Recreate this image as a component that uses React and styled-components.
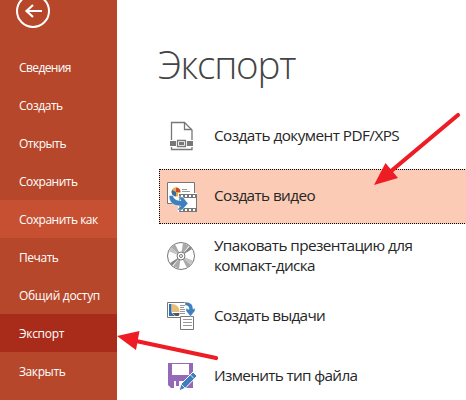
import React from 'react';
import styled, { createGlobalStyle } from 'styled-components';

const GlobalStyle = createGlobalStyle`
  * {
    box-sizing: border-box;
  }
  body {
    margin: 0;
    background: #fff;
    overflow: hidden;
  }
`;

const Page = styled.div`
  position: relative;
  display: flex;
  width: 466px;
  height: 400px;
  overflow: hidden;
  background: #fff;
  font-family: 'Open Sans', 'Noto Sans', sans-serif;
`;

const Sidebar = styled.nav`
  display: flex;
  flex-direction: column;
  width: 117px;
  flex-shrink: 0;
  background: #b7472a;
`;

const BackButton = styled.button`
  display: flex;
  align-items: flex-start;
  height: 48px;
  padding: 0 0 0 15px;
  border: none;
  background: transparent;
  flex-shrink: 0;
`;

const backgrounds = { hover: '#c75032', active: '#a92b1a' };

const NavItem = styled.a`
  display: flex;
  align-items: center;
  height: 38px;
  flex-shrink: 0;
  padding: 2px 0 0 19px;
  background: ${(props) => backgrounds[props.$state] || 'transparent'};
  color: #fff;
  font-size: 12px;
  font-weight: 450;
  line-height: 16px;
  letter-spacing: ${(props) => props.$spacing}px;
  white-space: nowrap;
`;

const Main = styled.main`
  flex: 1;
  min-width: 0;
  padding: 38px 0 0 41px;
`;

const Title = styled.h1`
  margin: 0;
  height: 71px;
  color: #444;
  font-size: 38.5px;
  font-weight: 300;
  line-height: 52px;
  letter-spacing: -1.2px;
`;

const ExportList = styled.div`
  display: flex;
  flex-direction: column;
  gap: 5px;
  padding-left: 1px;
`;

const ExportRow = styled.div`
  display: flex;
  align-items: center;
  width: 320px;
  height: 55px;
  padding-left: 6px;
  border: 1px dotted ${(props) => (props.$selected ? '#000' : 'transparent')};
  background: ${(props) => (props.$selected ? '#fbcbb5' : 'transparent')};

  svg {
    flex-shrink: 0;
  }
`;

const Label = styled.span`
  margin-left: 16px;
  padding-bottom: 3px;
  color: #262626;
  font-size: 15.3px;
  line-height: 20px;
  letter-spacing: ${(props) => props.$spacing}px;
  white-space: pre-line;
`;

const Arrows = styled.svg`
  position: absolute;
  top: 0;
  left: 0;
  pointer-events: none;
`;

const BackIcon = () => (
  <svg width="36" height="30" viewBox="0 0 36 30" fill="none" stroke="#fff">
    <circle cx="18" cy="11" r="16" strokeWidth="2" />
    <path d="M27 11H12M18 5l-6.5 6 6.5 6" strokeWidth="2.2" />
  </svg>
);

const PdfIcon = () => (
  <svg width="32" height="31" viewBox="0 0 32 31" fill="none" stroke="#777" strokeWidth="1.300">
    <path d="M5.500 19V1.500H18.500L26 9V19M5.500 26V28.500H26V26" />
    <path d="M18.500 1.500V8.500H26" />
    <path d="M4 20h6v5H4zM21 20h6v5h-6z" fill="#777" stroke="none" />
    <path d="M11.500 19.500h8v6h-8z" />
    <path d="M13 21h5v3h-5z" fill="#777" stroke="none" />
  </svg>
);

const VideoIcon = () => (
  <svg width="32" height="31" viewBox="0 0 32 31">
    <path d="M1.500 1.500h27v21h-27z" fill="#fff" stroke="#777" />
    <circle cx="10" cy="11" r="4.500" fill="#e0a94f" />
    <path d="M10 11V6.500a4.500 4.500 0 0 0-4 2.500z" fill="#e8ad58" />
    <path d="M10 6.500a4.500 4.500 0 0 1 4.500 4.500H10z" fill="#d24726" />
    <path d="M10 11L6 9a4.500 4.500 0 0 0 4 6.500z" fill="#356ea5" />
    <path d="M16 8.500h5M16 10.500h8" stroke="#999" />
    <path d="M12 12h19v19H12z" fill="#fff" />
    <path d="M13 13h18v18H13z" fill="#777" />
    <path d="M14 17h16v10H14z" fill="#fff" />
    <path d="M15 15h15M15 29h15" stroke="#fff" strokeWidth="2" strokeDasharray="2 2" />
    <path
      d="M3 14.500h4c1 4 4 5 8 5l-3-3.500h5l5 6.500-6 6.500h-5l3.500-4C8 25 3 22 3 14.500z"
      fill="#3f7fbc"
      stroke="#fff"
      strokeWidth=".5"
    />
  </svg>
);

const DiscIcon = () => (
  <svg width="32" height="31" viewBox="0 0 32 31">
    <circle cx="15" cy="15" r="13.500" fill="#fff" stroke="#777" />
    <path d="M15 15L5 6.500l4-3.500zM15 15l2-13 6 2.500zM15 15l10 9-4 3zM15 15l-2 12.500-6-2z" fill="#aaa" />
    <path d="M15 15L3 10.500 5 6.500zM15 15l12 4.500-2 4.500z" fill="#c4c4c4" />
    <path d="M15 15l9-10 2 3zM15 15l-9 10-2-3z" fill="#888" />
    <circle cx="15" cy="15" r="4" fill="#fff" stroke="#777" />
    <circle cx="15" cy="15" r="1.500" fill="#fff" stroke="#777" />
  </svg>
);

const HandoutIcon = () => (
  <svg width="32" height="31" viewBox="0 0 32 31">
    <path d="M20 1.500H1.500v15h13" fill="#fff" stroke="#777" />
    <path d="M3 3h2.500v8.500l3.500 3.500H3z" fill="#356ea5" />
    <path d="M6 3c4.500 0 7.500 3 7.500 8H6z" fill="#e9bd77" />
    <path d="M6.500 12h7c0 1.500-.5 2.500-1 3h-3z" fill="#555" />
    <path d="M14 4.500h5M14 6.500h4M14 8.500h5M14 10.500h5M14 12.500h5" stroke="#999" />
    <path d="M14.500 15.500h13v13h-13z" fill="#fff" stroke="#777" />
    <path d="M17 18.500h9M17 21.500h9M17 24.500h9" stroke="#999" />
    <path
      d="M19 1c5 0 8 2 8 7l2-1v3l-4.500 5.500L20 10V7l3 1.500c0-3-1-4-4-4z"
      fill="#3f7fbc"
      stroke="#fff"
      strokeWidth=".5"
    />
  </svg>
);

const SaveIcon = () => (
  <svg width="32" height="31" viewBox="0 0 32 31">
    <path d="M2 2h25v25H5l-3-3z" fill="#9668b8" />
    <path d="M6 3h17v11H6z" fill="#fff" />
    <path d="M8 20h12v7H8z" fill="#fff" />
    <path d="M10 20h3v5h-3z" fill="#9668b8" />
    <path d="M13 30l2-7L27 11l4 4-11.500 12z" fill="#3f7fbc" stroke="#fff" strokeWidth="1" />
    <path d="M24 13.500l4 4M15 23l4 4" stroke="#fff" strokeWidth=".8" />
  </svg>
);

const navItems = [
  { label: 'Сведения', spacing: -0.6 },
  { label: 'Создать', spacing: -0.45 },
  { label: 'Открыть', spacing: -0.5 },
  { label: 'Сохранить', spacing: -0.5 },
  { label: 'Сохранить как', spacing: -0.5, state: 'hover' },
  { label: 'Печать', spacing: -0.45 },
  { label: 'Общий доступ', spacing: -0.3 },
  { label: 'Экспорт', spacing: -0.3, state: 'active' },
  { label: 'Закрыть', spacing: -0.4 },
];

const exportItems = [
  { label: 'Создать документ PDF/XPS', icon: PdfIcon, spacing: -0.54 },
  { label: 'Создать видео', icon: VideoIcon, spacing: -0.6, selected: true },
  { label: 'Упаковать презентацию для\nкомпакт-диска', icon: DiscIcon, spacing: -0.58 },
  { label: 'Создать выдачи', icon: HandoutIcon, spacing: -0.68 },
  { label: 'Изменить тип файла', icon: SaveIcon, spacing: -0.66 },
];

const App = () => {
  return (
    <>
      <GlobalStyle />
      <Page>
        <Sidebar>
          <BackButton>
            <BackIcon />
          </BackButton>
          {navItems.map((item) => (
            <NavItem key={item.label} $state={item.state} $spacing={item.spacing}>
              {item.label}
            </NavItem>
          ))}
        </Sidebar>

        <Main>
          <Title>Экспорт</Title>
          <ExportList>
            {exportItems.map(({ label, icon: Icon, spacing, selected }) => (
              <ExportRow key={label} $selected={selected}>
                <Icon />
                <Label $spacing={spacing}>{label}</Label>
              </ExportRow>
            ))}
          </ExportList>
        </Main>

        {/* Red pointers over the page */}
        <Arrows width="466" height="400" viewBox="0 0 466 400" fill="#ee1c25" stroke="#ee1c25">
          <path d="M458 115L390 172M216 358L136 341" strokeWidth="4.200" strokeLinecap="round" />
          <path d="M374 185L385.500 163L398 178ZM117 336L139.500 331L136 350Z" stroke="none" />
        </Arrows>
      </Page>
    </>
  );
};

export default App;
